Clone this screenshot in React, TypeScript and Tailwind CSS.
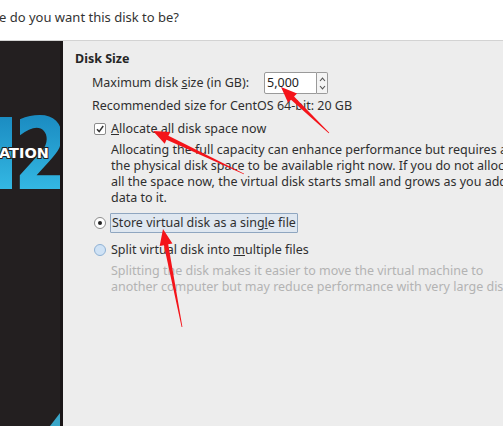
import React from 'react';

function Arrow({ x1, y1, x2, y2 }: { x1: number; y1: number; x2: number; y2: number }) {
    // tapered red annotation arrow, tail (x1,y1) -> tip (x2,y2)
    const dx = x2 - x1;
    const dy = y2 - y1;
    const len = Math.sqrt(dx * dx + dy * dy);
    const ux = dx / len;
    const uy = dy / len;
    const nx = -uy;
    const ny = ux;
    const headLen = 16;
    const headW = 6.5;
    const shaftW = 2.2;
    const bx = x2 - ux * headLen;
    const by = y2 - uy * headLen;
    const pts = [
        [x1 + nx * 0.4, y1 + ny * 0.4],
        [bx + nx * shaftW, by + ny * shaftW],
        [bx + nx * headW, by + ny * headW],
        [x2, y2],
        [bx - nx * headW, by - ny * headW],
        [bx - nx * shaftW, by - ny * shaftW],
        [x1 - nx * 0.4, y1 - ny * 0.4],
    ]
        .map((p) => p.join(','))
        .join(' ');
    return <polygon points={pts} fill="#f4141a" />;
}

export default function App() {
    return (
        <div
            className="relative w-[503px] h-[426px] overflow-hidden bg-white text-[12.5px] text-[#2f2f2f]"
            style={{ fontFamily: '"Noto Sans", "DejaVu Sans", sans-serif' }}
        >
            {/* wizard question */}
            <div className="h-[41px] border-b border-[#d3d3d3] bg-white">
                <div className="pt-[8px] -ml-[1px] leading-[18px] text-[13px] text-[#333]">
                    e do you want this disk to be?
                </div>
            </div>

            <div className="flex h-[385px]">
                {/* left banner */}
                <div className="w-[63px] shrink-0 bg-[#231f20] border-r-[3px] border-[#1a1617] overflow-hidden">
                    <svg width="60" height="385" className="block">
                        <defs>
                            <linearGradient id="logo" gradientUnits="userSpaceOnUse" x1="0" y1="76" x2="0" y2="150">
                                <stop offset="0" stopColor="#1b8cc2" />
                                <stop offset="1" stopColor="#34b9e4" />
                            </linearGradient>
                        </defs>
                        {/* stem of the "1", clipped at the panel edge */}
                        <rect x="0" y="76" width="12" height="72" fill="url(#logo)" />
                        <g transform="scale(0.8,1)">
                            <text x="17" y="148" fontSize="100" fontWeight="700" fill="url(#logo)" fontFamily="DejaVu Sans">
                                2
                            </text>
                        </g>
                        <text
                            x="-1"
                            y="117"
                            fontSize="14.5"
                            fontWeight="700"
                            fill="#ffffff"
                            stroke="#231f20"
                            strokeWidth="2"
                            paintOrder="stroke"
                            fontFamily="DejaVu Sans"
                        >
                            ATION
                        </text>
                        <polygon points="60,372 60,385 50,385" fill="#3aa6c8" />
                    </svg>
                </div>

                {/* options panel */}
                <div className="flex-1 bg-[#ededed] pl-[12px] pt-[10px]">
                    <div className="leading-[16px] font-bold text-[#262626]">Disk Size</div>

                    <div className="pl-[17px]">
                        <div className="mt-[5px] h-[22px] flex items-center">
                            <span>
                                Maximum disk <span className="underline">s</span>ize (in GB):
                            </span>
                            <div className="ml-[15px] flex h-[22px]">
                                <div className="w-[53px] h-[22px] bg-white border border-[#9a9a9a] rounded-l-[2px] pl-[2px] leading-[20px] text-[#222]">
                                    5,000
                                </div>
                                <div className="w-[11px] h-[22px] border border-l-0 border-[#9a9a9a] rounded-r-[2px] bg-[#f4f4f4] flex flex-col items-center justify-center gap-[3px]">
                                    <svg width="7" height="5" viewBox="0 0 7 5">
                                        <path d="M1 4 L3.5 1.2 L6 4" fill="none" stroke="#555" strokeWidth="1.1" />
                                    </svg>
                                    <svg width="7" height="5" viewBox="0 0 7 5">
                                        <path d="M1 1 L3.5 3.8 L6 1" fill="none" stroke="#555" strokeWidth="1.1" />
                                    </svg>
                                </div>
                            </div>
                        </div>

                        <div className="mt-[4px] leading-[16px]">Recommended size for CentOS 64-bit: 20 GB</div>

                        <div className="mt-[7px] h-[16px] flex items-center">
                            <div className="w-[12px] h-[12px] ml-[2px] bg-white border border-[#8c8c8c] rounded-[2px] flex items-center justify-center">
                                <svg width="10" height="10" viewBox="0 0 10 10">
                                    <path d="M2 5.2 L4.2 7.6 L8.2 2" fill="none" stroke="#333" strokeWidth="1.5" />
                                </svg>
                            </div>
                            <span className="ml-[5px]">
                                <span className="underline">A</span>llocate all disk space now
                            </span>
                        </div>

                        <div className="mt-[5px] ml-[19px] leading-[16px] whitespace-nowrap">
                            <div>Allocating the full capacity can enhance performance but requires all</div>
                            <div>the physical disk space to be available right now. If you do not allocate</div>
                            <div>all the space now, the virtual disk starts small and grows as you add</div>
                            <div>data to it.</div>
                        </div>

                        <div className="mt-[7px] h-[20px] flex items-center">
                            <div className="w-[12px] h-[12px] ml-[2px] rounded-full bg-white border border-[#8c8c8c] flex items-center justify-center">
                                <div className="w-[4px] h-[4px] rounded-full bg-[#222]" />
                            </div>
                            <span className="ml-[4px] h-[20px] px-[1px] leading-[18px] bg-[#dfe7f0] border border-[#8fa6c0] rounded-[1px]">
                                Store virtual disk as a sing<span className="underline">l</span>e file
                            </span>
                        </div>

                        <div className="mt-[9px] h-[16px] flex items-center">
                            <div className="w-[12px] h-[12px] ml-[2px] rounded-full bg-[#cfe2f5] border border-[#8fb1d4]" />
                            <span className="ml-[5px]">
                                Split virtual disk into <span className="underline">m</span>ultiple files
                            </span>
                        </div>

                        <div className="mt-[5px] ml-[19px] leading-[16px] whitespace-nowrap text-[#b3b3b3]">
                            <div>Splitting the disk makes it easier to move the virtual machine to</div>
                            <div>another computer but may reduce performance with very large disks.</div>
                        </div>
                    </div>
                </div>
            </div>

            {/* annotation arrows */}
            <svg className="absolute left-0 top-0 pointer-events-none" width="503" height="426">
                <Arrow x1={329} y1={133} x2={281} y2={87} />
                <Arrow x1={244} y1={174} x2={153} y2={131} />
                <Arrow x1={182} y1={327} x2={163} y2={229} />
            </svg>
        </div>
    );
}
